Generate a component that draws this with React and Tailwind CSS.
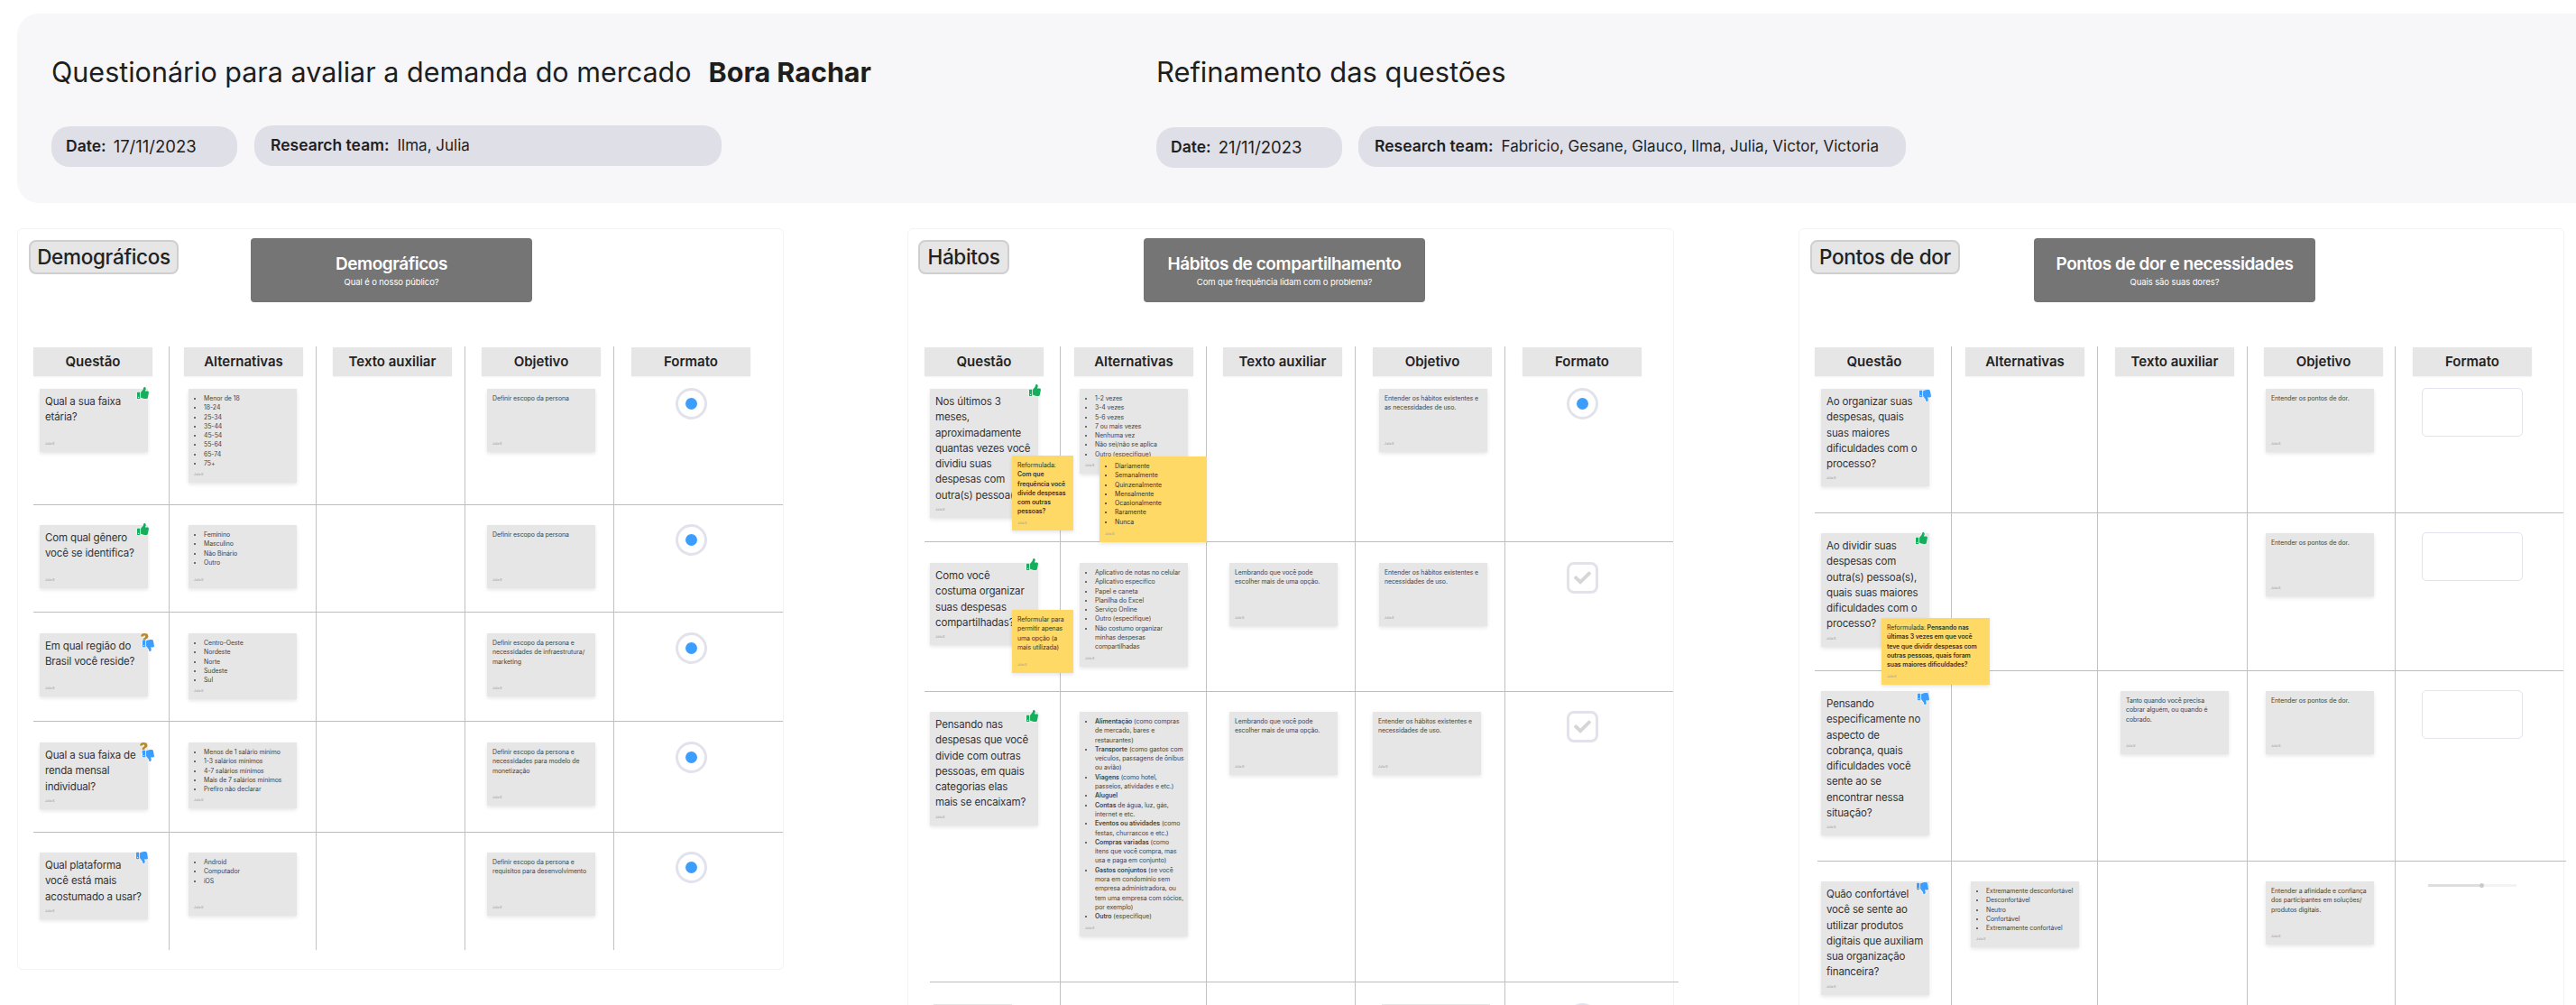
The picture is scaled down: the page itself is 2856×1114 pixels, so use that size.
import { FaThumbsUp, FaThumbsDown, FaCheck } from "react-icons/fa";

const Up = ({ pos }) => (
  <FaThumbsUp className={`absolute z-[5] text-[13px] text-[#14ae5c] drop-shadow-[0_0_1px_white] ${pos}`} />
);
const Down = ({ pos }) => (
  <FaThumbsDown className={`absolute z-[5] text-[13px] text-[#3b9eff] drop-shadow-[0_0_1px_white] ${pos}`} />
);
const Ask = ({ pos }) => (
  <span className={`absolute z-[5] text-[16px] leading-[16px] font-black text-[#b98a2b] drop-shadow-[0_0_1px_white] ${pos}`}>?</span>
);

const Footer = () => (
  <div className="mt-auto pt-[5px] h-[10px] text-[3.3px] leading-[5px] tracking-normal text-[#999]">Julia B</div>
);

const QCard = ({ children, stamps }) => (
  <div className="relative w-[120px] min-h-[70px] flex flex-col bg-[#e6e6e6] px-[6px] pt-[6px] pb-[6px] shadow-[0_2px_4px_rgba(0,0,0,0.1)] text-[11.5px] leading-[17.3px] tracking-[-0.15px] text-[#333]">
    <div>{children}</div>
    <Footer />
    {stamps}
  </div>
);

const Note = ({ children, pos }) => (
  <div className={`absolute z-10 flex flex-col bg-[#ffd966] px-[6px] pt-[6px] pb-[6px] shadow-[0_2px_4px_rgba(0,0,0,0.1)] text-[6.9px] leading-[10.3px] tracking-[-0.05px] text-[#333] ${pos}`}>
    <div>{children}</div>
    <Footer />
  </div>
);

const SmallCard = ({ children, notes }) => (
  <div className="relative w-[120px] min-h-[70px] flex flex-col bg-[#e6e6e6] pl-[6px] pr-[4px] pt-[6px] pb-[6px] shadow-[0_2px_4px_rgba(0,0,0,0.1)] text-[6.9px] leading-[10.3px] tracking-[-0.05px] text-[#444]">
    <div>{children}</div>
    <Footer />
    {notes}
  </div>
);

const List = ({ items }) => (
  <ul className="list-disc pl-[11px]">
    {items.map((item, i) => (
      <li key={i}>{item}</li>
    ))}
  </ul>
);

const Radio = () => (
  <div className="flex w-[170px] justify-center -mt-[1px]">
    <div className="flex h-[35px] w-[35px] items-center justify-center rounded-full border-[3px] border-[#e2e2ec] bg-white">
      <div className="h-[13px] w-[13px] rounded-full bg-[#3b9eff]"></div>
    </div>
  </div>
);

const Checkbox = () => (
  <div className="flex w-[170px] justify-center -mt-[1px]">
    <div className="flex h-[35px] w-[35px] items-center justify-center rounded-lg border-[3px] border-[#e2e2ec] bg-white">
      <FaCheck size={19} className="text-[#d6d6d6]" />
    </div>
  </div>
);

const TextBox = () => (
  <div className="flex w-[170px] justify-center -mt-[1px]">
    <div className="h-[54px] w-[112px] rounded-[5px] border border-[#e3e3ef] bg-white"></div>
  </div>
);

const Slider = () => (
  <div className="flex w-[170px] justify-center pt-[2px]">
    <div className="flex h-[5px] w-[98px] items-center">
      <div className="h-[3px] w-[57px] bg-[#dedede]"></div>
      <div className="h-[5px] w-[5px] rounded-full bg-[#c9c9c9]"></div>
      <div className="h-[3px] w-[36px] bg-[#f3f3f3]"></div>
    </div>
  </div>
);

const Row = ({ cols, height, top, pads, cells }) => (
  <div className={`grid ${cols} ${height}`}>
    {cells.map((cell, i) => (
      <div key={i} className={`${i > 0 ? "border-l border-[#c2c2c2]" : ""} ${top} ${pads[i]}`}>
        {cell}
      </div>
    ))}
  </div>
);

const Divider = ({ shift = "" }) => <div className={`h-px bg-[#bdbdbd] ${shift}`}></div>;

const heads = ["Questão", "Alternativas", "Texto auxiliar", "Objetivo", "Formato"];

const Section = ({ width, tag, tagClass, title, sub, bannerMargin, cols, chipPads, tableMargin, children }) => (
  <section className={`${width} shrink-0 rounded-md border border-[#f3f3f3] bg-white pb-[21px]`}>
    <div className="flex h-[130px] items-start">
      <div className={`flex h-[38px] items-center justify-center rounded-lg border-2 border-[#cfcfcf] bg-[#e6e6e6] text-[22.5px] font-medium tracking-[-0.3px] text-[#222] mt-[12px] ${tagClass}`}>
        {tag}
      </div>
      <div className={`flex h-[71px] w-[312px] flex-col items-center justify-center rounded-sm bg-[#757575] text-white mt-[10px] ${bannerMargin}`}>
        <div className="text-[19px] leading-[26px] font-semibold tracking-[-0.45px]">{title}</div>
        <div className="text-[9.5px] leading-[14px] tracking-[-0.1px]">{sub}</div>
      </div>
    </div>
    <div className={tableMargin}>
      <div className={`grid ${cols} h-[47px]`}>
        {heads.map((head, i) => (
          <div key={head} className={`${i > 0 ? "border-l border-[#c2c2c2]" : ""} pt-px ${chipPads[i]}`}>
            <div className="flex h-[32px] w-[132px] items-center justify-center bg-[#e6e6e6] text-[15px] font-semibold text-[#222] shadow-[0_1px_2px_rgba(0,0,0,0.05)]">
              {head}
            </div>
          </div>
        ))}
      </div>
      {children}
    </div>
  </section>
);

const PageHeader = () => (
  <header className="ml-[19px] mt-[15px] flex h-[210px] rounded-l-3xl bg-[#f7f7f9] pl-[38px] text-[#1e1e1e]">
    <div className="w-[1225px] shrink-0">
      <div className="mt-[43px] flex h-[44px] items-center text-[30.5px]">
        <span>Questionário para avaliar a demanda do mercado</span>
        <span className="ml-[19px] font-bold">Bora Rachar</span>
      </div>
      <div className="mt-[38px] flex gap-[19px]">
        <div className="flex h-[45px] w-[206px] items-center gap-[8px] rounded-[20px] bg-[#dfdfe8] px-[16px] text-[17.5px] whitespace-nowrap">
          <b className="font-semibold">Date:</b> <span className="text-[18.5px]">17/11/2023</span>
        </div>
        <div className="flex h-[45px] w-[518px] items-center gap-[9px] rounded-[20px] bg-[#dfdfe8] px-[18px] text-[17.5px] whitespace-nowrap -mt-[1px]">
          <b className="font-semibold">Research team:</b> <span className="text-[17px]">Ilma, Julia</span>
        </div>
      </div>
    </div>
    <div>
      <div className="mt-[43px] flex h-[44px] items-center text-[30.9px]">Refinamento das questões</div>
      <div className="mt-[39px] flex gap-[18px]">
        <div className="flex h-[45px] w-[206px] items-center gap-[8px] rounded-[20px] bg-[#dfdfe8] px-[16px] text-[17.5px] whitespace-nowrap">
          <b className="font-semibold">Date:</b> <span className="text-[18.5px]">21/11/2023</span>
        </div>
        <div className="flex h-[45px] w-[607px] items-center gap-[9px] rounded-[20px] bg-[#dfdfe8] px-[18px] text-[17.5px] whitespace-nowrap -mt-[1px]">
          <b className="font-semibold">Research team:</b> <span className="text-[17px]">Fabricio, Gesane, Glauco, Ilma, Julia, Victor, Victoria</span>
        </div>
      </div>
    </div>
  </header>
);

const colsA = "grid-cols-[150px_163px_165px_165px_166px]";
const padsA = ["pl-[7px]", "pl-[21px]", "pl-[24px]", "pl-[24px]", "pl-0"];

const Demograficos = () => (
  <Section
    width="w-[850px]"
    tag="Demográficos"
    tagClass="ml-[12px] w-[166px]"
    title="Demográficos"
    sub="Qual é o nosso público?"
    bannerMargin="ml-[80px]"
    cols={colsA}
    chipPads={["pl-0", "pl-[16px]", "pl-[18px]", "pl-[18px]", "pl-[19px]"]}
    tableMargin="ml-[17px]"
  >
    <Row
      cols={colsA}
      height="h-[128px]"
      top=""
      pads={padsA}
      cells={[
        <QCard stamps={<Up pos="-top-[2px] -right-[1px]" />}>Qual a sua faixa etária?</QCard>,
        <SmallCard><List items={["Menor de 18", "18-24", "25-34", "35-44", "45-54", "55-64", "65-74", "75+"]} /></SmallCard>,
        null,
        <SmallCard>Definir escopo da persona</SmallCard>,
        <Radio />,
      ]}
    />
    <Divider />
    <Row
      cols={colsA}
      height="h-[118px]"
      top="pt-[22px]"
      pads={padsA}
      cells={[
        <QCard stamps={<Up pos="-top-[2px] -right-[1px]" />}>Com qual gênero você se identifica?</QCard>,
        <SmallCard><List items={["Feminino", "Masculino", "Não Binário", "Outro"]} /></SmallCard>,
        null,
        <SmallCard>Definir escopo da persona</SmallCard>,
        <Radio />,
      ]}
    />
    <Divider />
    <Row
      cols={colsA}
      height="h-[120px]"
      top="pt-[23px]"
      pads={padsA}
      cells={[
        <QCard stamps={<><Ask pos="-top-[2px] -right-[1px]" /><Down pos="top-[7px] -right-[7px]" /></>}>Em qual região do Brasil você reside?</QCard>,
        <SmallCard><List items={["Centro-Oeste", "Nordeste", "Norte", "Sudeste", "Sul"]} /></SmallCard>,
        null,
        <SmallCard>Definir escopo da persona e necessidades de infraestrutura/ marketing</SmallCard>,
        <Radio />,
      ]}
    />
    <Divider />
    <Row
      cols={colsA}
      height="h-[122px]"
      top="pt-[23px]"
      pads={padsA}
      cells={[
        <QCard stamps={<><Ask pos="-top-[2px] right-0" /><Down pos="top-[8px] -right-[7px]" /></>}>Qual a sua faixa de renda mensal individual?</QCard>,
        <SmallCard><List items={["Menos de 1 salário mínimo", "1-3 salários mínimos", "4-7 salários mínimos", "Mais de 7 salários mínimos", "Prefiro não declarar"]} /></SmallCard>,
        null,
        <SmallCard>Definir escopo da persona e necessidades para modelo de monetização</SmallCard>,
        <Radio />,
      ]}
    />
    <Divider />
    <Row
      cols={colsA}
      height="h-[130px]"
      top="pt-[22px]"
      pads={padsA}
      cells={[
        <QCard stamps={<Down pos="-top-px right-0" />}>Qual plataforma você está mais acostumado a usar?</QCard>,
        <SmallCard><List items={["Android", "Computador", "iOS"]} /></SmallCard>,
        null,
        <SmallCard>Definir escopo da persona e requisitos para desenvolvimento</SmallCard>,
        <Radio />,
      ]}
    />
  </Section>
);

const colsB = "grid-cols-[150px_162px_165px_166px_166px]";
const padsB = ["pl-[6px]", "pl-[21px]", "pl-[25px]", "pl-[26px]", "pl-0"];
const padsB3 = ["pl-[6px]", "pl-[21px]", "pl-[25px]", "pl-[19px]", "pl-0"];
const padsB4 = ["pl-[10px]", "pl-[21px]", "pl-[25px]", "pl-[29px]", "pl-0"];

const Habitos = () => (
  <Section
    width="w-[850px] ml-[137px]"
    tag="Hábitos"
    tagClass="ml-[11px] w-[101px]"
    title="Hábitos de compartilhamento"
    sub="Com que frequência lidam com o problema?"
    bannerMargin="ml-[149px]"
    cols={colsB}
    chipPads={["pl-0", "pl-[15px]", "pl-[18px]", "pl-[19px]", "pl-[19px]"]}
    tableMargin="ml-[18px]"
  >
    <Row
      cols={colsB}
      height="h-[169px]"
      top=""
      pads={padsB}
      cells={[
        <QCard
          stamps={
            <>
              <Up pos="-top-[5px] -right-[3px]" />
              <Note pos="left-[91px] top-[74px] h-[83px] w-[68px]">
                Reformulada:
                <br />
                <b className="font-semibold">Com que frequência você divide despesas com outras pessoas?</b>
              </Note>
            </>
          }
        >
          Nos últimos 3 meses, aproximadamente quantas vezes você dividiu suas despesas com outra(s) pessoa(s)?
        </QCard>,
        <SmallCard
          notes={
            <Note pos="left-[22px] top-[75px] h-[95px] w-[119px]">
              <List items={["Diariamente", "Semanalmente", "Quinzenalmente", "Mensalmente", "Ocasionalmente", "Raramente", "Nunca"]} />
            </Note>
          }
        >
          <List items={["1-2 vezes", "3-4 vezes", "5-6 vezes", "7 ou mais vezes", "Nenhuma vez", "Não sei/não se aplica", "Outro (especifique)"]} />
        </SmallCard>,
        null,
        <SmallCard>Entender os hábitos existentes e as necessidades de uso.</SmallCard>,
        <Radio />,
      ]}
    />
    <Divider />
    <Row
      cols={colsB}
      height="h-[165px]"
      top="pt-[23px]"
      pads={padsB}
      cells={[
        <QCard
          stamps={
            <>
              <Up pos="-top-[5px] right-0" />
              <Note pos="left-[91px] top-[52px] h-[70px] w-[68px]">Reformular para permitir apenas uma opção (a mais utilizada)</Note>
            </>
          }
        >
          Como você costuma organizar suas despesas compartilhadas?
        </QCard>,
        <SmallCard>
          <List
            items={[
              "Aplicativo de notas no celular",
              "Aplicativo específico",
              "Papel e caneta",
              "Planilha do Excel",
              "Serviço Online",
              "Outro (especifique)",
              <>Não costumo organizar<br />minhas despesas<br />compartilhadas</>,
            ]}
          />
        </SmallCard>,
        <SmallCard>Lembrando que você pode escolher mais de uma opção.</SmallCard>,
        <SmallCard>Entender os hábitos existentes e necessidades de uso.</SmallCard>,
        <Checkbox />,
      ]}
    />
    <Divider />
    <Row
      cols={colsB}
      height="h-[321px]"
      top="pt-[22px]"
      pads={padsB3}
      cells={[
        <QCard stamps={<Up pos="-top-[2px] right-0" />}>Pensando nas despesas que você divide com outras pessoas, em quais categorias elas mais se encaixam?</QCard>,
        <SmallCard>
          <List
            items={[
              <><b className="font-semibold">Alimentação</b> (como compras de mercado, bares e restaurantes)</>,
              <><b className="font-semibold">Transporte</b> (como gastos com veículos, passagens de ônibus ou avião)</>,
              <><b className="font-semibold">Viagens</b> (como hotel, passeios, atividades e etc.)</>,
              <b className="font-semibold">Aluguel</b>,
              <><b className="font-semibold">Contas</b> de água, luz, gás, internet e etc.</>,
              <><b className="font-semibold">Eventos ou atividades</b> (como festas, churrascos e etc.)</>,
              <><b className="font-semibold">Compras variadas</b> (como itens que você compra, mas usa e paga em conjunto)</>,
              <><b className="font-semibold">Gastos conjuntos</b> (se você mora em condomínio sem empresa administradora, ou tem uma empresa com sócios, por exemplo)</>,
              <><b className="font-semibold">Outro</b> (especifique)</>,
            ]}
          />
        </SmallCard>,
        <SmallCard>Lembrando que você pode escolher mais de uma opção.</SmallCard>,
        <SmallCard>Entender os hábitos existentes e necessidades de uso.</SmallCard>,
        <Checkbox />,
      ]}
    />
    <Divider shift="ml-[6px] -mr-[6px]" />
    <Row
      cols={colsB}
      height="h-[120px]"
      top="pt-[24px]"
      pads={padsB4}
      cells={[
        <div className="h-[30px] w-[87px] bg-[#e6e6e6]"></div>,
        null,
        null,
        <div className="h-[30px] w-[120px] bg-[#e6e6e6]"></div>,
        <Radio />,
      ]}
    />
  </Section>
);

const colsC = "grid-cols-[151px_162px_166px_164px_166px]";
const padsC = ["pl-[7px]", "pl-[21px]", "pl-[25px]", "pl-[20px]", "pl-0"];

const PontosDeDor = () => (
  <Section
    width="w-[849px] ml-[138px]"
    tag="Pontos de dor"
    tagClass="ml-[12px] w-[166px]"
    title="Pontos de dor e necessidades"
    sub="Quais são suas dores?"
    bannerMargin="ml-[82px]"
    cols={colsC}
    chipPads={["pl-0", "pl-[15px]", "pl-[19px]", "pl-[18px]", "pl-[19px]"]}
    tableMargin="ml-[17px]"
  >
    <Row
      cols={colsC}
      height="h-[137px]"
      top=""
      pads={padsC}
      cells={[
        <QCard stamps={<Down pos="top-px -right-[2px]" />}>Ao organizar suas despesas, quais suas maiores dificuldades com o processo?</QCard>,
        null,
        null,
        <SmallCard>Entender os pontos de dor.</SmallCard>,
        <TextBox />,
      ]}
    />
    <Divider />
    <Row
      cols={colsC}
      height="h-[174px]"
      top="pt-[22px]"
      pads={padsC}
      cells={[
        <QCard
          stamps={
            <>
              <Up pos="-top-px right-[2px]" />
              <Note pos="left-[67px] top-[94px] h-[74px] w-[120px]">
                Reformulada: <b className="font-semibold">Pensando nas últimas 3 vezes em que você teve que dividir despesas com outras pessoas, quais foram suas maiores dificuldades?</b>
              </Note>
            </>
          }
        >
          Ao dividir suas despesas com outra(s) pessoa(s), quais suas maiores dificuldades com o processo?
        </QCard>,
        null,
        null,
        <SmallCard>Entender os pontos de dor.</SmallCard>,
        <TextBox />,
      ]}
    />
    <Divider />
    <Row
      cols={colsC}
      height="h-[210px]"
      top="pt-[22px]"
      pads={padsC}
      cells={[
        <QCard stamps={<Down pos="top-[2px] right-0" />}>Pensando especificamente no aspecto de cobrança, quais dificuldades você sente ao se encontrar nessa situação?</QCard>,
        null,
        <SmallCard>Tanto quando você precisa<br />cobrar alguém, ou quando é<br />cobrado.</SmallCard>,
        <SmallCard>Entender os pontos de dor.</SmallCard>,
        <TextBox />,
      ]}
    />
    <Divider shift="ml-[3px] -mr-[3px]" />
    <Row
      cols={colsC}
      height="h-[200px]"
      top="pt-[22px]"
      pads={padsC}
      cells={[
        <QCard stamps={<Down pos="top-px right-px" />}>Quão confortável você se sente ao utilizar produtos digitais que auxiliam sua organização financeira?</QCard>,
        <SmallCard><List items={["Extremamente desconfortável", "Desconfortável", "Neutro", "Confortável", "Extremamente confortável"]} /></SmallCard>,
        null,
        <SmallCard>Entender a afinidade e confiança dos participantes em soluções/ produtos digitais.</SmallCard>,
        <Slider />,
      ]}
    />
  </Section>
);

export default function App() {
  return (
    <div className="h-[1114px] w-[2856px] overflow-hidden bg-white font-[Inter,sans-serif]">
      <PageHeader />
      <div className="ml-[19px] mt-[28px] flex items-start">
        <Demograficos />
        <Habitos />
        <PontosDeDor />
      </div>
    </div>
  );
}
